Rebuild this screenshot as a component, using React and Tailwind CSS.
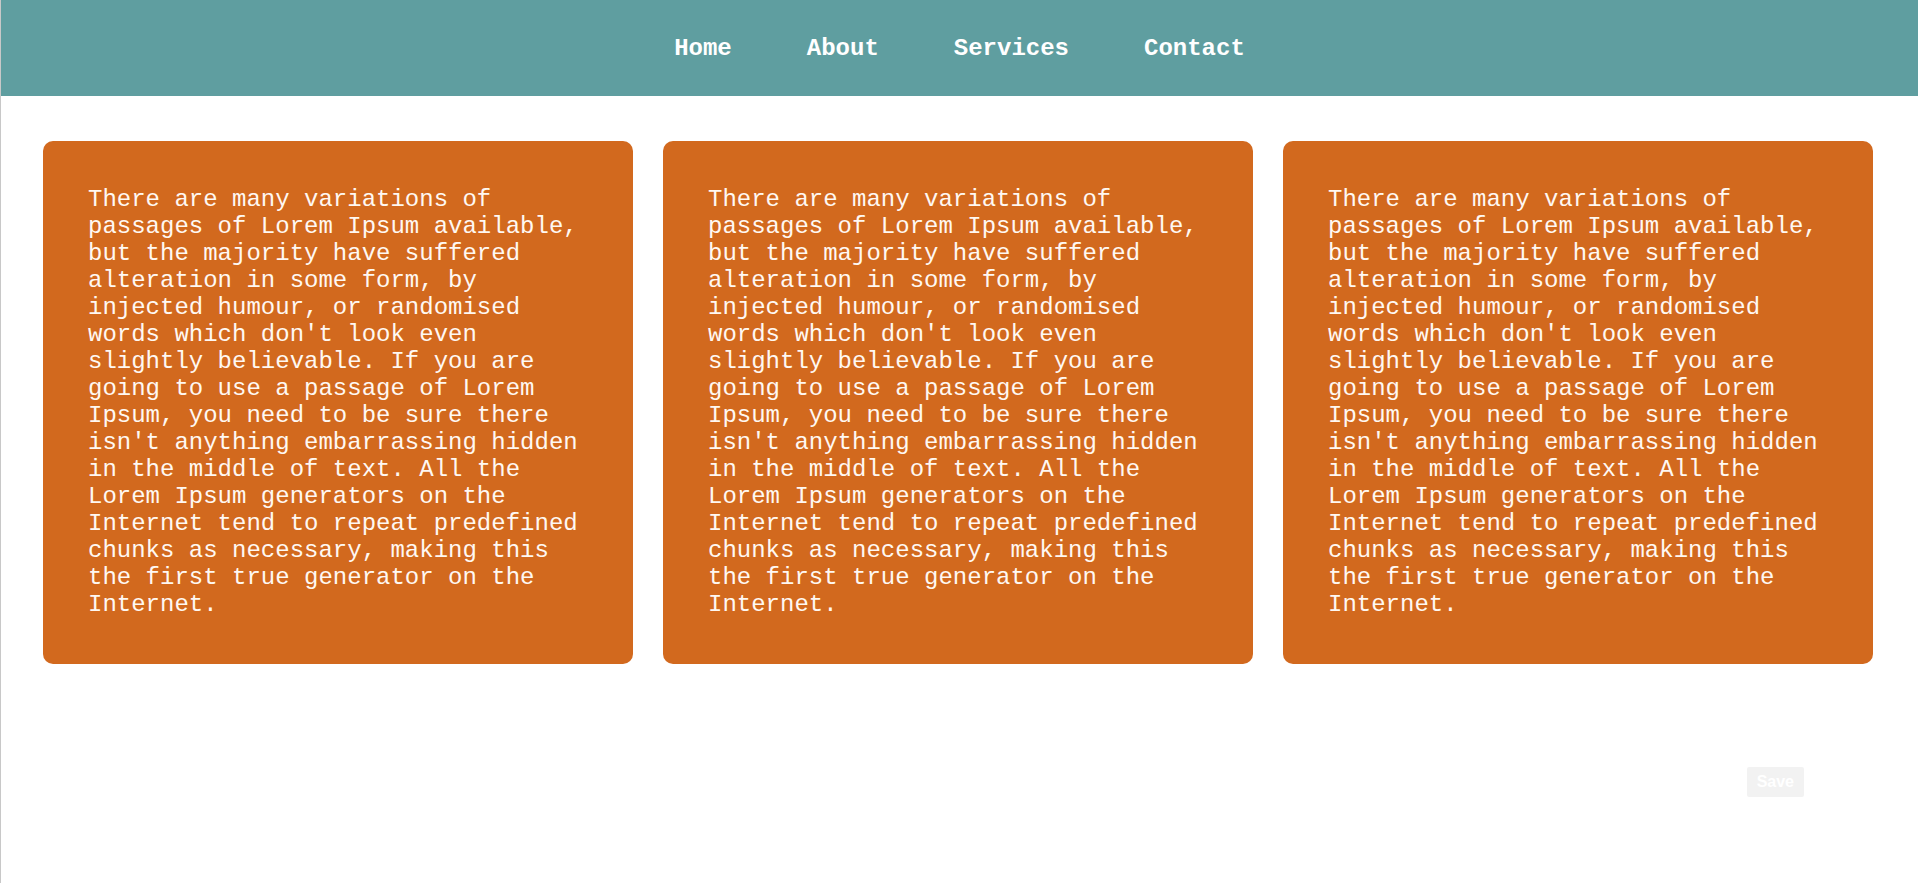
const text =
  "There are many variations of passages of Lorem Ipsum available, but the majority have suffered alteration in some form, by injected humour, or randomised words which don't look even slightly believable. If you are going to use a passage of Lorem Ipsum, you need to be sure there isn't anything embarrassing hidden in the middle of text. All the Lorem Ipsum generators on the Internet tend to repeat predefined chunks as necessary, making this the first true generator on the Internet."

const links = ['Home', 'About', 'Services', 'Contact']

export default function App() {
  return (
    <div className="min-h-[883px] bg-white border-l border-[#c8c8c8] font-['Liberation_Mono','Courier_New',monospace]">
      <nav className="h-[96px] bg-[#5f9ea0] flex items-center justify-center gap-[75px] pt-[2px]">
        {links.map((l) => (
          <a key={l} href="#" className="text-white font-bold text-[24px] leading-none">
            {l}
          </a>
        ))}
      </nav>

      <div className="flex gap-[30px] pl-[42px] pr-[45px] pt-[45px]">
        {[0, 1, 2].map((i) => (
          <div key={i} className="flex-1 bg-[#d2691e] rounded-[10px] px-[45px] pt-[45px] pb-[46px]">
            <p className="text-[#fff8f2] text-[24px] leading-[27px]">{text}</p>
          </div>
        ))}
      </div>

      <div className="flex justify-end pr-[114px] pt-[103px]">
        <button className="bg-[#f2f2f2] text-white font-bold text-[16px] h-[30px] px-[10px] rounded-[2px] font-[Arial,'Liberation_Sans',sans-serif]">
          Save
        </button>
      </div>
    </div>
  )
}
